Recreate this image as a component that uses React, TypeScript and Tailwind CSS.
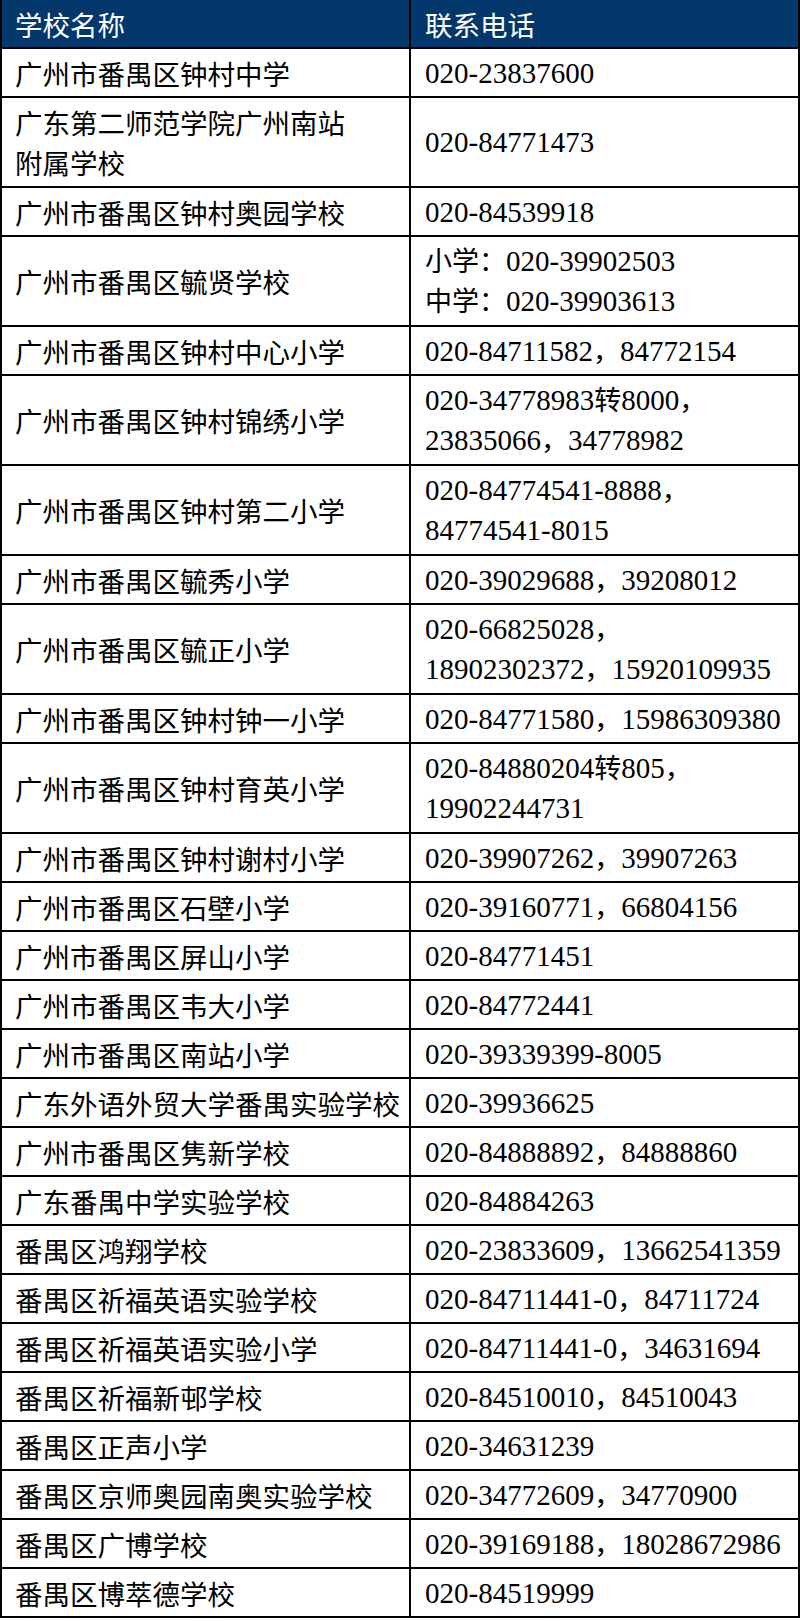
import React from 'react';

type Row = { name: string[]; phone: string[] };

const rows: Row[] = [
  { name: ['广州市番禺区钟村中学'], phone: ['020-23837600'] },
  { name: ['广东第二师范学院广州南站', '附属学校'], phone: ['020-84771473'] },
  { name: ['广州市番禺区钟村奥园学校'], phone: ['020-84539918'] },
  { name: ['广州市番禺区毓贤学校'], phone: ['小学：020-39902503', '中学：020-39903613'] },
  { name: ['广州市番禺区钟村中心小学'], phone: ['020-84711582，84772154'] },
  { name: ['广州市番禺区钟村锦绣小学'], phone: ['020-34778983转8000，', '23835066，34778982'] },
  { name: ['广州市番禺区钟村第二小学'], phone: ['020-84774541-8888，', '84774541-8015'] },
  { name: ['广州市番禺区毓秀小学'], phone: ['020-39029688，39208012'] },
  { name: ['广州市番禺区毓正小学'], phone: ['020-66825028，', '18902302372，15920109935'] },
  { name: ['广州市番禺区钟村钟一小学'], phone: ['020-84771580，15986309380'] },
  { name: ['广州市番禺区钟村育英小学'], phone: ['020-84880204转805，', '19902244731'] },
  { name: ['广州市番禺区钟村谢村小学'], phone: ['020-39907262，39907263'] },
  { name: ['广州市番禺区石壁小学'], phone: ['020-39160771，66804156'] },
  { name: ['广州市番禺区屏山小学'], phone: ['020-84771451'] },
  { name: ['广州市番禺区韦大小学'], phone: ['020-84772441'] },
  { name: ['广州市番禺区南站小学'], phone: ['020-39339399-8005'] },
  { name: ['广东外语外贸大学番禺实验学校'], phone: ['020-39936625'] },
  { name: ['广州市番禺区隽新学校'], phone: ['020-84888892，84888860'] },
  { name: ['广东番禺中学实验学校'], phone: ['020-84884263'] },
  { name: ['番禺区鸿翔学校'], phone: ['020-23833609，13662541359'] },
  { name: ['番禺区祈福英语实验学校'], phone: ['020-84711441-0，84711724'] },
  { name: ['番禺区祈福英语实验小学'], phone: ['020-84711441-0，34631694'] },
  { name: ['番禺区祈福新邨学校'], phone: ['020-84510010，84510043'] },
  { name: ['番禺区正声小学'], phone: ['020-34631239'] },
  { name: ['番禺区京师奥园南奥实验学校'], phone: ['020-34772609，34770900'] },
  { name: ['番禺区广博学校'], phone: ['020-39169188，18028672986'] },
  { name: ['番禺区博萃德学校'], phone: ['020-84519999'] },
];

// 数字用衬线体，中文和全角标点换成黑体
function PhoneLine({ text }: { text: string }) {
  const parts = text.split(/([^\x00-\x7f]+)/).filter(p => p !== '');
  return (
    <div className="h-[40px] leading-[40px]">
      {parts.map((p, i) =>
        /[^\x00-\x7f]/.test(p) ? (
          <span key={i} className="font-['Noto_Sans_CJK_SC',sans-serif] text-[27px] leading-none">{p}</span>
        ) : (
          <span key={i}>{p}</span>
        )
      )}
    </div>
  );
}

export default function App() {
  return (
    <div className="w-[800px] bg-white">
      <div className="border-x-2 border-black text-black">
        <div className="flex h-[49px] bg-[#04376b] text-white border-b-2 border-black font-['Noto_Sans_CJK_SC',sans-serif] text-[27.5px] leading-[40px]">
          <div className="w-[409px] shrink-0 border-r-2 border-black pl-[13px] flex items-center">学校名称</div>
          <div className="flex-1 pl-[14px] flex items-center">联系电话</div>
        </div>
        {rows.map((row, i) => {
          const tall = row.name.length > 1 || row.phone.length > 1;
          return (
            <div key={i} className={tall ? 'flex h-[90px] border-b-2 border-black' : 'flex h-[49px] border-b-2 border-black'}>
              <div className="w-[409px] shrink-0 border-r-2 border-black pl-[13px] flex flex-col justify-center font-['Noto_Sans_CJK_SC',sans-serif] text-[27.5px] leading-[40px] whitespace-nowrap">
                {row.name.map((n, j) => (
                  <div key={j} className="h-[40px]">{n}</div>
                ))}
              </div>
              <div className="flex-1 pl-[14px] flex flex-col justify-center font-['Liberation_Serif','Noto_Sans_CJK_SC',serif] text-[29px] whitespace-nowrap overflow-hidden">
                {row.phone.map((p, j) => (
                  <PhoneLine key={j} text={p} />
                ))}
              </div>
            </div>
          );
        })}
      </div>
    </div>
  );
}
